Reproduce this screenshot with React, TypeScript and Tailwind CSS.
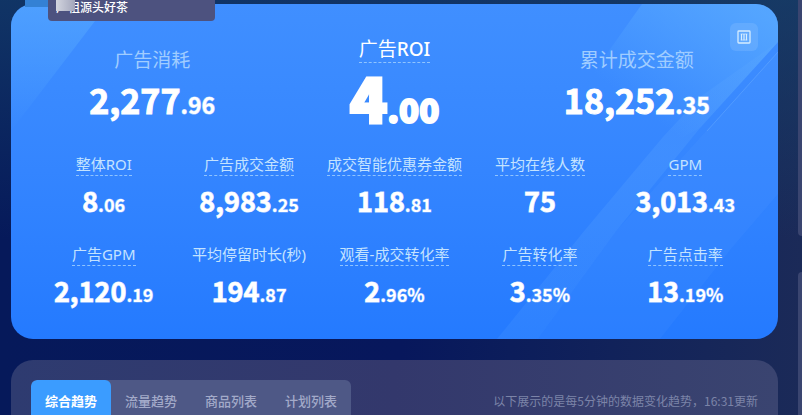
import { ReactNode } from "react"

type Metric = { label: string; int: string; dec?: string; plain?: boolean }

const metrics: Metric[] = [
  { label: "整体ROI", int: "8", dec: ".06" },
  { label: "广告成交金额", int: "8,983", dec: ".25" },
  { label: "成交智能优惠券金额", int: "118", dec: ".81" },
  { label: "平均在线人数", int: "75" },
  { label: "GPM", int: "3,013", dec: ".43" },
  { label: "广告GPM", int: "2,120", dec: ".19" },
  { label: "平均停留时长(秒)", int: "194", dec: ".87", plain: true },
  { label: "观看-成交转化率", int: "2", dec: ".96%" },
  { label: "广告转化率", int: "3", dec: ".35%" },
  { label: "广告点击率", int: "13", dec: ".19%" },
]

const tabs = ["综合趋势", "流量趋势", "商品列表", "计划列表"]

function Underlined({ children, plain }: { children: ReactNode; plain?: boolean }) {
  return (
    <span className={plain ? "border-b border-transparent" : "border-b border-dashed border-[#8fc4ff]"}>
      {children}
    </span>
  )
}

function SideTotal({ label, int, dec }: Metric) {
  return (
    <div className="flex flex-col items-center pt-3">
      <div className="text-[19px] leading-6 text-[#a0cdff]">{label}</div>
      <div className="mt-1 font-['Noto_Sans_CJK_SC',sans-serif] text-[34px] leading-[48px] font-bold [-webkit-text-stroke:1px_white]">
        {int}<span className="text-[23px] leading-none [-webkit-text-stroke:1px_#ffffff99]">{dec}</span>
      </div>
    </div>
  )
}

function MetricCell({ label, int, dec, plain }: Metric) {
  return (
    <div className="flex flex-col items-center whitespace-nowrap">
      <div className="flex text-[15px] leading-[22px] text-[#c4e3ff]">
        <Underlined plain={plain}>{label}</Underlined>
      </div>
      <div className="mt-[6px] font-['Noto_Sans_CJK_SC',sans-serif] text-[27px] leading-[38px] font-bold [-webkit-text-stroke:1px_#ffffffcc]">
        {int}{dec && <span className="text-[18px] leading-none [-webkit-text-stroke:1px_#ffffff66]">{dec}</span>}
      </div>
    </div>
  )
}

function CardShine() {
  return (
    <svg className="absolute inset-0 h-full w-full" viewBox="0 0 767 335" preserveAspectRatio="none" aria-hidden="true">
      <defs>
        <linearGradient id="left" x1="0" y1="0" x2="0" y2="1">
          <stop offset="0" stopColor="#5cb0ff" stopOpacity="0.5" />
          <stop offset="1" stopColor="#5cb0ff" stopOpacity="0" />
        </linearGradient>
        <linearGradient id="right" gradientUnits="userSpaceOnUse" x1="740" y1="0" x2="650" y2="120">
          <stop offset="0" stopColor="#62b4ff" stopOpacity="0.6" />
          <stop offset="1" stopColor="#62b4ff" stopOpacity="0" />
        </linearGradient>
        <linearGradient id="band" x1="0" y1="0" x2="0" y2="1">
          <stop offset="0" stopColor="#6db4ff" stopOpacity="0.1" />
          <stop offset="0.4" stopColor="#6db4ff" stopOpacity="0.18" />
          <stop offset="1" stopColor="#6db4ff" stopOpacity="0.12" />
        </linearGradient>
      </defs>
      <path d="M0 0H97L0 127Z" fill="url(#left)" />
      <path d="M631 0H767V38L689 124L640 150H525Z" fill="url(#right)" />
      <path d="M767 38L689 124L606 226L527 335H486L574 226L652 133L689 93Z" fill="url(#band)" />
      <path d="M767 47L696 126L606 226L527 335H649L719 246L767 190Z" fill="#6db4ff" fillOpacity="0.08" />
      <path d="M767 48L696 127" stroke="#7dbdff" strokeOpacity="0.3" strokeWidth="1" />
    </svg>
  )
}

function App() {
  return (
    <div className="relative flex h-screen gap-5 overflow-hidden bg-linear-to-r from-[#06195a] via-[#07175c] to-[#1b2a58] pl-[11px] font-['Noto_Sans','Noto_Sans_CJK_SC',sans-serif] text-white">
      <div className="absolute inset-x-0 top-0 h-60 bg-linear-to-b from-[#15406a]/70 to-transparent" />
      <main className="relative flex min-w-0 flex-1 flex-col gap-[21px] pt-1">
        <section className="relative shrink-0 overflow-hidden rounded-[22px] bg-linear-to-b from-[#408fff] via-[#3485ff] to-[#247aff] px-5 pt-8 pb-[29px]">
          <CardShine />
          <div className="relative grid grid-cols-3">
            <SideTotal label="广告消耗" int="2,277" dec=".96" />
            <div className="flex flex-col items-center">
              <div className="flex text-[19px] leading-[26px]">
                <Underlined>广告<span className="font-medium">ROI</span></Underlined>
              </div>
              <div className="font-['Noto_Sans_CJK_SC',sans-serif] text-[62px] leading-[67px] font-black [-webkit-text-stroke:3px_white]">
                4<span className="text-[33px] leading-none [-webkit-text-stroke:2px_white]">.00</span>
              </div>
            </div>
            <SideTotal label="累计成交金额" int="18,252" dec=".35" />
          </div>
          <div className="relative mt-[23px] grid grid-cols-5 gap-y-[23px]">
            {metrics.map((m) => (
              <MetricCell key={m.label} {...m} />
            ))}
          </div>
          <button aria-label="数据面板" className="absolute top-[19px] right-5 flex size-7 items-center justify-center rounded-md bg-white/10">
            <svg width="14" height="14" viewBox="0 0 14 14" fill="none" stroke="#d6edff">
              <rect x="1" y="1" width="12" height="12" rx="0.8" strokeWidth="1.3" />
              <path d="M4.5 4V10.2M7 4V10.2M9.5 4V10.2" strokeWidth="1.2" />
              <path d="M3.6 4H10.4M3.6 10H10.4" strokeWidth="0.7" />
            </svg>
          </button>
        </section>
        <section className="flex shrink-0 items-start justify-between rounded-t-[22px] bg-linear-to-r from-[#2e3b70] via-[#33386c] to-[#3a4470] px-5 pt-5 pb-20">
          <div role="tablist" className="flex h-[42px] overflow-hidden rounded-md bg-[#4e5886] font-['Noto_Sans_CJK_SC',sans-serif] text-[13px]">
            {tabs.map((tab, i) => (
              <button
                key={tab}
                role="tab"
                aria-selected={i === 0}
                className={i === 0 ? "rounded-md bg-[#3b9cff] px-3.5 font-bold" : "px-3.5 font-medium text-[#a3aac9]"}
              >
                {tab}
              </button>
            ))}
          </div>
          <p className="font-['Noto_Sans_CJK_SC',sans-serif] text-[12px] leading-[42px] text-[#7c84a8]">
            以下展示的是每5分钟的数据变化趋势，16:31更新
          </p>
        </section>
      </main>
      <aside className="relative flex w-1 shrink-0 flex-col gap-9">
        <div className="h-[236px] shrink-0 rounded-bl-md bg-[#3a4570]" />
        <div className="flex-1 rounded-tl-md bg-[#3a4570]" />
      </aside>
      <div className="absolute top-0 left-[25px] h-[7px] w-6 bg-[#3481d4]" />
      <div className="absolute top-0 left-12 h-[21px] w-[167px] rounded-b bg-[#4d527f] pl-2">
        <p className="-mt-px font-['Noto_Sans_CJK_SC',sans-serif] text-[12px] leading-4 font-medium">广祖源头好茶</p>
        <div className="absolute top-0 left-2 h-[11px] w-[19px] bg-linear-to-r from-[#d3d5df] to-[#a3a6bb]" />
      </div>
    </div>
  )
}

export default App
